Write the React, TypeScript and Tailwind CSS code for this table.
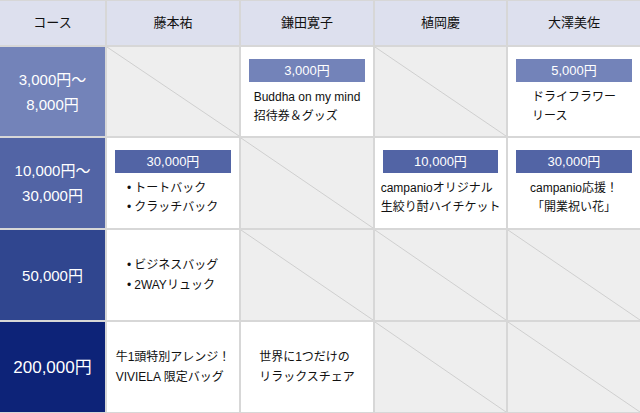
const font = { fontFamily: '"Liberation Sans", "Noto Sans CJK JP", sans-serif' };

function Empty() {
  return (
    <div className="relative bg-[#eeeeee]">
      <svg className="absolute inset-0 h-full w-full" preserveAspectRatio="none" viewBox="0 0 100 100">
        <line x1="0" y1="0" x2="100" y2="100" stroke="#cfcfcf" strokeWidth="1" vectorEffect="non-scaling-stroke" />
      </svg>
    </div>
  );
}

function Badge({ label, color }: { label: string; color: string }) {
  return (
    <div className={`flex h-[23px] items-center justify-center text-[13px] text-white ${color}`}>{label}</div>
  );
}

function Cell({ badge, color, lines, align = "text-left" }: { badge?: string; color?: string; lines: string[]; align?: string }) {
  return (
    <div className="flex flex-col bg-white px-2 pt-3">
      {badge && <Badge label={badge} color={color ?? ""} />}
      <div className="mt-[6px] flex justify-center">
        <div className={`inline-block text-[12px] leading-[19px] text-[#111] ${align}`}>
          {lines.map((l) => (
            <div key={l} className="whitespace-nowrap">{l}</div>
          ))}
        </div>
      </div>
    </div>
  );
}

function Plain({ lines, bullets }: { lines: string[]; bullets?: boolean }) {
  return (
    <div className={`flex items-center bg-white ${bullets ? "justify-start pl-[20px]" : "justify-center"}`}>
      <div className="text-[12px] leading-[20px] text-[#111]">
        {lines.map((l) => (
          <div key={l} className="whitespace-nowrap">
            {bullets && <span className="mr-[3px]">•</span>}
            {l}
          </div>
        ))}
      </div>
    </div>
  );
}

function BulletCell({ badge, color, items }: { badge: string; color: string; items: string[] }) {
  return (
    <div className="flex flex-col bg-white px-2 pt-3">
      <Badge label={badge} color={color} />
      <div className="mt-[6px] pl-[12px] text-[12px] leading-[19px] text-[#111]">
        {items.map((l) => (
          <div key={l} className="whitespace-nowrap">
            <span className="mr-[3px]">•</span>
            {l}
          </div>
        ))}
      </div>
    </div>
  );
}

function Label({ lines, color, size = "text-[15px]" }: { lines: string[]; color: string; size?: string }) {
  return (
    <div className={`flex flex-col items-center justify-center leading-[25px] text-white ${size} ${color}`}>
      {lines.map((l) => (
        <div key={l}>{l}</div>
      ))}
    </div>
  );
}

export default function App() {
  const headers = ["コース", "藤本祐", "鎌田寛子", "植岡慶", "大澤美佐"];
  return (
    <div style={font} className="h-[413px] w-[640px] bg-white">
      <div className="grid grid-cols-[105px_132px_132px_131px_132px] grid-rows-[44px_89px_90px_90px_90px] gap-[2px] bg-[#d7d7d7] py-[1px]">
        {headers.map((h) => (
          <div key={h} className="flex items-center justify-center bg-[#dde0ee] text-[13px] text-[#111]">
            {h}
          </div>
        ))}

        <Label lines={["3,000円～", "8,000円"]} color="bg-[#7383b9]" />
        <Empty />
        <Cell badge="3,000円" color="bg-[#7383b9]" lines={["Buddha on my mind", "招待券＆グッズ"]} />
        <Empty />
        <Cell badge="5,000円" color="bg-[#7383b9]" lines={["ドライフラワー", "リース"]} />

        <Label lines={["10,000円～", "30,000円"]} color="bg-[#5264a5]" />
        <BulletCell badge="30,000円" color="bg-[#5264a5]" items={["トートバック", "クラッチバック"]} />
        <Empty />
        <Cell badge="10,000円" color="bg-[#5264a5]" lines={["campanioオリジナル", "生絞り酎ハイチケット"]} />
        <Cell badge="30,000円" color="bg-[#5264a5]" lines={["campanio応援！", "「開業祝い花」"]} align="text-center" />

        <Label lines={["50,000円"]} color="bg-[#30468f]" />
        <Plain lines={["ビジネスバッグ", "2WAYリュック"]} bullets />
        <Empty />
        <Empty />
        <Empty />

        <Label lines={["200,000円"]} color="bg-[#0d2378]" size="text-[17px]" />
        <Plain lines={["牛1頭特別アレンジ！", "VIVIELA 限定バッグ"]} />
        <Plain lines={["世界に1つだけの", "リラックスチェア"]} />
        <Empty />
        <Empty />
      </div>
    </div>
  );
}
